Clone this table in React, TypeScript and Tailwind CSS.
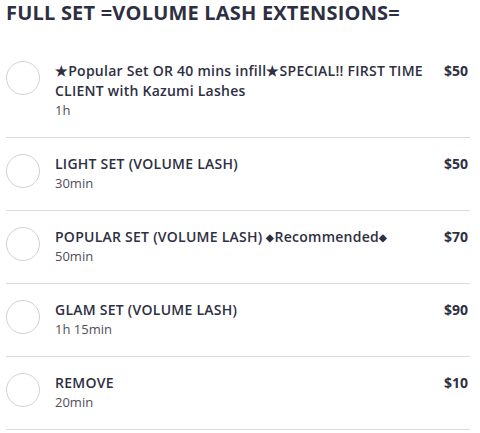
import React from 'react';

type Service = {
  name: React.ReactNode;
  duration: string;
  price: string;
};

const Diamond = () => <span className="text-[10px] align-[1px]">◆</span>;

const services: Service[] = [
  { name: '★Popular Set OR 40 mins infill★SPECIAL!! FIRST TIME CLIENT with Kazumi Lashes', duration: '1h', price: '$50' },
  { name: 'LIGHT SET (VOLUME LASH)', duration: '30min', price: '$50' },
  {
    name: (
      <>
        POPULAR SET (VOLUME LASH) <Diamond />Recommended<Diamond />
      </>
    ),
    duration: '50min',
    price: '$70',
  },
  { name: 'GLAM SET (VOLUME LASH)', duration: '1h 15min', price: '$90' },
  { name: 'REMOVE', duration: '20min', price: '$10' },
];

export default function App() {
  return (
    <div className="w-[480px] h-[433px] overflow-hidden bg-white pl-[6px] pr-[10px] text-[#2e2f42] font-['Open_Sans',sans-serif]">
      <h2 className="text-[20px] leading-[26px] font-bold tracking-[0.2px] h-[45px]">
        FULL SET =VOLUME LASH EXTENSIONS=
      </h2>

      <ul>
        {services.map((s, i) => (
          <li key={i} className="flex items-start pt-4 pb-[18px] border-b border-[#dadada]">
            <div className="w-[34px] h-[34px] shrink-0 rounded-full border border-[#d2d2d2] mr-[15px]" />
            <div className="flex-1 min-w-0">
              <div className="text-[14px] leading-5 font-semibold tracking-[0.25px]">{s.name}</div>
              <div className="text-[13px] leading-[18px] text-[#4f4f5a]">{s.duration}</div>
            </div>
            <div className="ml-5 pr-[2px] text-[14px] leading-5 font-bold">{s.price}</div>
          </li>
        ))}
      </ul>
    </div>
  );
}
